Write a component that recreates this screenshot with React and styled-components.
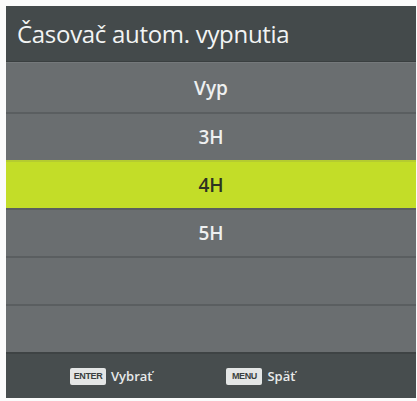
import React from "react";
import styled, { createGlobalStyle } from "styled-components";

const Global = createGlobalStyle`
  html, body { margin: 0; padding: 0; background: #ffffff; }
  body { font-family: "Open Sans", "Noto Sans", sans-serif; }
`;

const Page = styled.div`
  width: 417px;
  height: 401px;
  padding: 6px 1px 3px 6px;
  box-sizing: border-box;
  background: #fbfbfb;
`;

const Panel = styled.div`
  display: flex;
  flex-direction: column;
  height: 100%;
  background: #6a6e70;
`;

const Title = styled.div`
  height: 58px;
  display: flex;
  align-items: center;
  padding-left: 11px;
  background: #444a4b;
  color: #f2f4f4;
  font-size: 24px;
  font-weight: 500;
  letter-spacing: -0.3px;
  border-bottom: 1px solid #3a3f40;
`;

const List = styled.div`
  flex: 1;
  display: flex;
  flex-direction: column;
`;

const Row = styled.div`
  height: 48px;
  box-sizing: border-box;
  display: flex;
  align-items: center;
  justify-content: center;
  font-size: 19px;
  font-weight: 600;
  color: ${(p) => (p.$active ? "#2e3322" : "#eef0f0")};
  background: ${(p) => (p.$active ? "#c3dd28" : "#6a6e70")};
  border-top: 2px solid ${(p) => (p.$active ? "#b5cc30" : "#5a5e60")};
  &:first-child { border-top: 1px solid #75797b; height: 50px; }
`;

const Footer = styled.div`
  height: 46px;
  display: flex;
  align-items: center;
  padding-left: 64px;
  gap: 74px;
  background: #474d4e;
  border-top: 2px solid #3e4344;
`;

const Hint = styled.div`
  display: flex;
  align-items: center;
  gap: 5px;
  color: #e8eaea;
  font-size: 13px;
  font-weight: 600;
`;

const Key = styled.span`
  display: inline-flex;
  align-items: center;
  justify-content: center;
  width: ${(p) => p.$w}px;
  height: 17px;
  background: #e4e6e6;
  border-radius: 2px;
  color: #3a3f40;
  font-family: "Liberation Sans Narrow", "Liberation Sans", sans-serif;
  font-size: 9px;
  font-weight: 700;
  letter-spacing: -0.4px;
`;

const items = ["Vyp", "3H", "4H", "5H", "", ""];

export default function App() {
  return (
    <>
      <Global />
      <Page>
        <Panel>
          <Title>Časovač autom. vypnutia</Title>
          <List>
            {items.map((t, i) => (
              <Row key={i} $active={t === "4H"}>
                {t}
              </Row>
            ))}
          </List>
          <Footer>
            <Hint>
              <Key $w={36}>ENTER</Key>Vybrať
            </Hint>
            <Hint>
              <Key $w={36}>MENU</Key>Späť
            </Hint>
          </Footer>
        </Panel>
      </Page>
    </>
  );
}
